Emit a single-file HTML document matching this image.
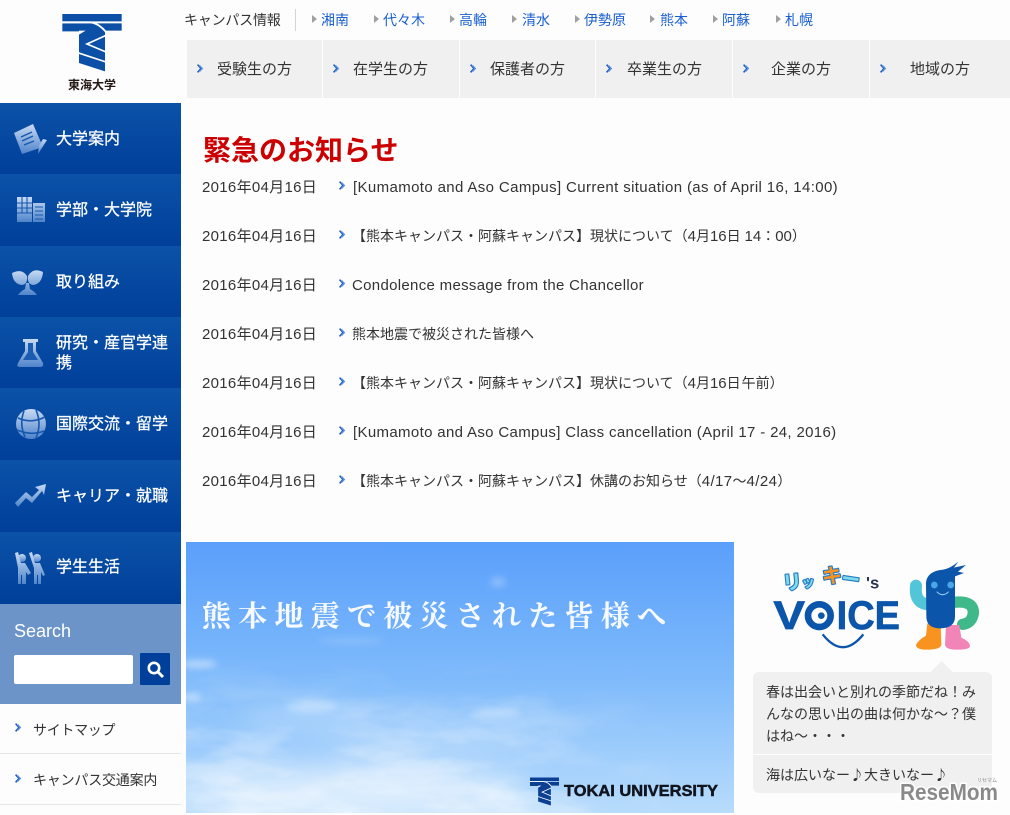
<!DOCTYPE html>
<html lang="ja"><head><meta charset="utf-8"><title>東海大学</title>
<style>
html,body{margin:0;padding:0;width:1010px;height:815px;overflow:hidden;background:#fdfdfe}
body{position:relative;font-family:"Liberation Sans","Noto Sans CJK JP",sans-serif;color:#333}
.t{position:absolute;white-space:nowrap;line-height:1;font-size:14px}
.n{position:absolute;top:40px;height:58px;background:#f0f0f0}
.s{position:absolute;left:0;width:181px;background:linear-gradient(#0b52a8,#003f9a)}
.m{position:absolute;left:56px;color:#fff;font-size:16px;line-height:1;white-space:nowrap;font-weight:400;-webkit-text-stroke:.25px #fff}
.c{color:#1a5fd0}
.d{font-size:15px;letter-spacing:.3px}
.l{font-size:15px;letter-spacing:.37px}
.u{font-size:15px}
.j{font-family:"Noto Sans CJK JP",sans-serif}
.a,.g{position:absolute}
</style></head><body>
<svg width="0" height="0" style="position:absolute"><defs>
<linearGradient id="ig" x1="0" y1="0" x2="0" y2="1"><stop offset="0" stop-color="#c8daf4"/><stop offset="1" stop-color="#4f84ca"/></linearGradient>
<linearGradient id="sky" x1="0" y1="0" x2="0" y2="1"><stop offset="0" stop-color="#5a9ffb"/><stop offset=".5" stop-color="#7ebafb"/><stop offset="1" stop-color="#b8dcfc"/></linearGradient>
<linearGradient id="fade" x1="0" y1="0" x2="0" y2="1"><stop offset=".42" stop-color="#000"/><stop offset=".65" stop-color="#666"/><stop offset="1" stop-color="#ddd"/></linearGradient>
<linearGradient id="fadex" x1="0" y1="0" x2="1" y2="0"><stop offset="0" stop-color="#fff"/><stop offset=".6" stop-color="#fff"/><stop offset=".9" stop-color="#000"/></linearGradient>
<mask id="cmx"><rect width="548" height="271" fill="url(#fadex)"/></mask>
<mask id="cm"><rect width="548" height="271" fill="url(#fade)"/></mask>
<filter id="tb" x="0" y="0" width="100%" height="100%"><feTurbulence type="fractalNoise" baseFrequency=".011 .032" numOctaves="4" seed="7"/><feColorMatrix values="0 0 0 0 1 0 0 0 0 1 0 0 0 0 1 3.4 0 0 0 -1.35"/></filter>
<filter id="b1" x="-60%" y="-200%" width="220%" height="500%"><feGaussianBlur stdDeviation="14"/></filter>
<filter id="b2" x="-60%" y="-200%" width="220%" height="500%"><feGaussianBlur stdDeviation="3.5"/></filter>
<g id="ar"><path d="M.6 .6 4 4.5 .6 8.4" fill="none" stroke="#1a5cc0" stroke-width="1.6"/><path d="M2.6 1.6 5.3 4.5 2.6 7.4" fill="none" stroke="#5b93dc" stroke-width="1.4"/></g>
<g id="lg">
<path d="M22 18H200V40H22ZM22 46H200V68H150V190L72 165V70H22Z"/>
<path d="M16 43H105Q130 45 153 72" fill="none" stroke="#fff" stroke-width="5.5"/>
<path d="M72 68H92L72 80Z" fill="#fff"/>
<path d="M153 82 96 108 153 132M68 134 153 162" fill="none" stroke="#fff" stroke-width="5"/>
</g>
</defs></svg>

<!-- logo -->
<svg style="position:absolute;left:55px;top:8px" width="75" height="90" viewBox="0 0 225 270" fill="#0b4fa6"><use href="#lg"/></svg>
<div class="t" style="left:68px;top:79px;font-size:12px;font-weight:700;color:#231815;line-height:12px">東海大学</div>

<!-- campus -->
<div class="t" style="left:184px;top:13px;letter-spacing:-.2px">キャンパス情報</div>
<div class="a" style="left:295px;top:9px;width:1px;height:22px;background:#d4d4d4"></div>
<svg class="a" style="left:0;top:0" width="1010" height="40" fill="#a0a0a0"><path d="M312 15l5 4-5 4zM374 15l5 4-5 4zM450 15l5 4-5 4zM512 15l5 4-5 4zM575 15l5 4-5 4zM650 15l5 4-5 4zM713 15l5 4-5 4zM776 15l5 4-5 4z"/></svg>
<div class="t c" style="left:321px;top:13px">湘南</div>
<div class="t c" style="left:383px;top:13px">代々木</div>
<div class="t c" style="left:459px;top:13px">高輪</div>
<div class="t c" style="left:522px;top:13px">清水</div>
<div class="t c" style="left:584px;top:13px">伊勢原</div>
<div class="t c" style="left:660px;top:13px">熊本</div>
<div class="t c" style="left:722px;top:13px">阿蘇</div>
<div class="t c" style="left:785px;top:13px">札幌</div>

<!-- nav -->
<div class="n" style="left:187px;width:135px"></div>
<div class="n" style="left:323px;width:136px"></div>
<div class="n" style="left:460px;width:135px"></div>
<div class="n" style="left:596px;width:136px"></div>
<div class="n" style="left:733px;width:136px"></div>
<div class="n" style="left:870px;width:140px"></div>
<div class="t" style="left:217px;top:62px;font-size:15px">受験生の方</div>
<div class="t" style="left:353px;top:62px;font-size:15px">在学生の方</div>
<div class="t" style="left:490px;top:62px;font-size:15px">保護者の方</div>
<div class="t" style="left:627px;top:62px;font-size:15px">卒業生の方</div>
<div class="t" style="left:771px;top:62px;font-size:15px">企業の方</div>
<div class="t" style="left:910px;top:62px;font-size:15px">地域の方</div>

<!-- chevrons -->
<svg class="a" style="left:0;top:0" width="1010" height="815">
<use href="#ar" x="197" y="64"/><use href="#ar" x="333" y="64"/><use href="#ar" x="470" y="64"/><use href="#ar" x="606" y="64"/><use href="#ar" x="743" y="64"/><use href="#ar" x="880" y="64"/>
<use href="#ar" x="339" y="181"/><use href="#ar" x="339" y="230"/><use href="#ar" x="339" y="279"/><use href="#ar" x="339" y="328"/><use href="#ar" x="339" y="377"/><use href="#ar" x="339" y="426"/><use href="#ar" x="339" y="475"/>
<use href="#ar" x="15" y="723"/><use href="#ar" x="15" y="774"/>
</svg>

<!-- sidebar -->
<div class="s" style="top:103px;height:71px"></div>
<div class="s" style="top:174px;height:72px"></div>
<div class="s" style="top:246px;height:71px"></div>
<div class="s" style="top:317px;height:71px"></div>
<div class="s" style="top:388px;height:72px"></div>
<div class="s" style="top:460px;height:72px"></div>
<div class="s" style="top:532px;height:72px"></div>
<div class="m" style="top:132px">大学案内</div>
<div class="m" style="top:203px">学部・大学院</div>
<div class="m" style="top:275px">取り組み</div>
<div class="m" style="top:336px">研究・産官学連</div>
<div class="m" style="top:356px">携</div>
<div class="m" style="top:417px">国際交流・留学</div>
<div class="m" style="top:489px">キャリア・就職</div>
<div class="m" style="top:560px">学生生活</div>

<svg class="a" style="left:0;top:100px" width="181" height="500" viewBox="0 100 181 500">
<g fill="url(#ig)">
<path d="M14 133 33 124 43 147 22 154Z"/><path d="M38 154 47 140 43 139 39 146Z"/>
<path d="M17 197H32V222H17ZM33 203H45V222H33Z"/>
<path d="M12 273Q22 268 27 276 28 284 22 285 13 284 12 273ZM43 272Q33 267 28 276 27 284 33 285 42 284 43 272ZM26 283H29L30 289Q34 291 37 295H18Q21 291 25 289Z"/>
<path d="M23 339H38V342H36V351L43 363Q44 367 40 367H20Q16 367 18 363L25 351V342H23Z"/>
<circle cx="31" cy="424" r="15"/>
<path d="M15 503 26 492 32 497 39 490 35 487 46 484 44 495 42 491 32 503 26 498 18 507Z"/>
<circle cx="22" cy="558" r="4"/><circle cx="37" cy="558" r="4"/>
<path d="M15 553 18 552 21 563H25L31 573 28 575 26 572V584H22V575H21V584H18V568ZM29 553 32 552 35 563H40L45 575 43 576 41 572V584H38V575H37V584H34V568Z"/>
</g>
<g stroke="#1658ad" fill="none" stroke-width="1.1">
<path d="M21 137 32 132M22 141 33 136M24 145 34 141" stroke-width="1.4"/>
<path d="M17 203H32M17 208H32M17 213H32M22 197V213M27 197V213M35 207H43M35 211H43M35 215H43M35 219H43"/>
<path d="M28 343H33V352L38 360H23L28 352Z" stroke="none" fill="#1b5cb0"/>
<path d="M18 418Q31 424 45 417M17 430Q31 436 44 431M24 411Q19 424 25 437M36 410Q42 424 36 438" stroke-width="1.6"/>
</g></svg>

<!-- search -->
<div class="a" style="left:0;top:604px;width:181px;height:100px;background:#6c94c9"></div>
<div class="t" style="left:14px;top:622px;font-size:18px;color:#fff">Search</div>
<div class="a" style="left:14px;top:655px;width:119px;height:29px;background:#fff;border-radius:2px"></div>
<div class="a" style="left:140px;top:653px;width:30px;height:32px;background:#00409a;border-radius:1px"></div>
<svg class="a" style="left:140px;top:653px" width="30" height="32"><circle cx="14" cy="15" r="5.2" fill="none" stroke="#fff" stroke-width="2.6"/><path d="M18 19 23 24" stroke="#fff" stroke-width="3"/></svg>

<div class="t" style="left:33px;top:723px;letter-spacing:-.3px">サイトマップ</div>
<div class="a" style="left:0;top:753px;width:181px;height:1px;background:#e4e6e8"></div>
<div class="t" style="left:33px;top:773px;letter-spacing:-.2px">キャンパス交通案内</div>
<div class="a" style="left:0;top:804px;width:181px;height:1px;background:#e4e6e8"></div>

<!-- news -->
<div class="t" style="left:203px;top:137px;font-size:28px;font-weight:700;color:#cc0000">緊急のお知らせ</div>
<div class="t d" style="left:202px;top:180px">2016年04月16日</div>
<div class="t d" style="left:202px;top:229px">2016年04月16日</div>
<div class="t d" style="left:202px;top:278px">2016年04月16日</div>
<div class="t d" style="left:202px;top:327px">2016年04月16日</div>
<div class="t d" style="left:202px;top:376px">2016年04月16日</div>
<div class="t d" style="left:202px;top:425px">2016年04月16日</div>
<div class="t d" style="left:202px;top:474px">2016年04月16日</div>
<div class="t l" style="left:353px;top:180px">[Kumamoto and Aso Campus] Current situation (as of April 16, 14:00)</div>
<div class="t" style="left:352px;top:229px">【熊本キャンパス・阿蘇キャンパス】現状について（<span class="u">4</span>月<span class="u">16</span>日 <span class="u">14</span>：<span class="u">00</span>）</div>
<div class="t" style="left:352px;top:278px;font-size:15px;letter-spacing:.31px">Condolence message from the Chancellor</div>
<div class="t" style="left:352px;top:327px">熊本地震で被災された皆様へ</div>
<div class="t" style="left:352px;top:376px">【熊本キャンパス・阿蘇キャンパス】現状について（<span class="u">4</span>月<span class="u">16</span>日<span style="margin-left:1px">午前</span>）</div>
<div class="t l" style="left:353px;top:425px;letter-spacing:.34px">[Kumamoto and Aso Campus] Class cancellation (April 17 - 24, 2016)</div>
<div class="t" style="left:352px;top:474px">【熊本キャンパス・阿蘇キャンパス】休講のお知らせ（<span class="u" style="letter-spacing:.4px">4/17</span>〜<span class="u" style="letter-spacing:.4px">4/24</span>）</div>

<!-- banner -->
<svg class="a" style="left:186px;top:542px" width="548" height="271" viewBox="0 0 548 271">
<rect width="548" height="271" fill="url(#sky)"/>
<g fill="#fff" filter="url(#b1)">
<ellipse cx="170" cy="250" rx="170" ry="26" opacity=".55"/>
<ellipse cx="260" cy="195" rx="120" ry="12" opacity=".3"/>
<ellipse cx="120" cy="175" rx="70" ry="12" opacity=".3"/>
</g>
<g mask="url(#cmx)"><g mask="url(#cm)"><rect width="548" height="271" filter="url(#tb)" opacity=".5"/></g></g>
<g fill="#fff" filter="url(#b2)">
<ellipse cx="13" cy="122" rx="18" ry="4" opacity=".45"/>
<ellipse cx="5" cy="155" rx="10" ry="4" opacity=".4"/>
<ellipse cx="312" cy="40" rx="8" ry="5" opacity=".25"/>
<ellipse cx="165" cy="99" rx="32" ry="2.5" opacity=".2"/>
<ellipse cx="310" cy="170" rx="25" ry="4" opacity=".3"/>
<ellipse cx="125" cy="165" rx="25" ry="6" opacity=".3"/>
</g>
<text x="16" y="84" font-family="'Noto Serif CJK JP','Noto Serif CJK SC',serif" font-size="29" font-weight="700" fill="#fff" textLength="464" lengthAdjust="spacing" opacity=".95">熊本地震で被災された皆様へ</text>
<svg x="344" y="235" width="29" height="29" viewBox="22 18 178 172" fill="#0b3f94"><use href="#lg"/></svg>
<text x="378" y="254" font-family="'Liberation Sans',sans-serif" font-size="16" font-weight="700" fill="#10151f" stroke="#10151f" stroke-width=".5" textLength="154" lengthAdjust="spacingAndGlyphs">TOKAI UNIVERSITY</text>
</svg>

<!-- voice -->
<svg class="a" style="left:740px;top:545px" width="270" height="270" viewBox="0 0 810 810">
<g font-family="'Noto Sans CJK JP',sans-serif" font-weight="700" paint-order="stroke" stroke="#2d7dc4" stroke-width="7" stroke-linejoin="round">
<text x="130" y="135" font-size="58" fill="#7fdcec" transform="rotate(-6 130 135)">リ</text>
<text x="186" y="128" font-size="40" fill="#7fdcec" transform="rotate(-6 186 128)">ッ</text>
<text x="246" y="112" font-size="60" fill="#f7931e">キ</text>
<text x="302" y="118" font-size="56" fill="#7fdcec" transform="rotate(8 302 118)">ー</text>
</g>
<text x="378" y="130" font-family="'Liberation Sans',sans-serif" font-weight="700" font-size="50" fill="#2c3550">'s</text>
<g font-family="'Liberation Sans',sans-serif" font-weight="700" fill="#0b55aa">
<text x="100" y="252" font-size="120" textLength="95" lengthAdjust="spacingAndGlyphs" stroke="#0b55aa" stroke-width="2">V</text>
<circle cx="238" cy="212" r="34" fill="none" stroke="#0b55aa" stroke-width="20"/>
<circle cx="244" cy="212" r="10"/>
<text x="290" y="252" font-size="120" textLength="190" lengthAdjust="spacingAndGlyphs" stroke="#0b55aa" stroke-width="2">ICE</text>
</g>
<path d="M248 268Q308 345 370 268" fill="none" stroke="#0b55aa" stroke-width="7"/>
<path d="M570 178Q522 178 528 122" fill="none" stroke="#52c5d9" stroke-width="36" stroke-linecap="round"/>
<path d="M640 172Q702 165 700 205 695 235 668 238" fill="none" stroke="#3fb98a" stroke-width="34" stroke-linecap="round"/>
<path d="M562 235H602L604 300Q600 314 560 314 528 314 528 300 535 285 558 272Z" fill="#f7931e"/>
<path d="M618 240H658L664 278Q690 290 690 304 688 314 650 314 618 314 615 300Z" fill="#f285b8"/>
<path d="M558 112Q562 78 610 74 632 70 655 50L642 68 678 60 654 80 672 84 645 94V215Q645 250 600 250 558 250 559 212Z" fill="#0b55aa"/>
<circle cx="583" cy="120" r="10" fill="#4aa8e8"/><circle cx="632" cy="120" r="10" fill="#4aa8e8"/>
<path d="M590 140Q608 158 626 140" fill="none" stroke="#9fd0f0" stroke-width="3"/>
<path d="M572 381 605 348 638 381Z" fill="#f0f0f0"/>
</svg>
<div class="a" style="left:753px;top:672px;width:239px;height:121px;background:#f0f0f0;border-radius:6px"></div>
<div class="a" style="left:753px;top:754px;width:239px;height:1px;background:#fff"></div>
<div class="t" style="left:766px;top:685px">春は出会いと別れの季節だね！み</div>
<div class="t" style="left:766px;top:707px">んなの思い出の曲は何かな〜？僕</div>
<div class="t" style="left:766px;top:729px">はね〜・・・</div>
<div class="t" style="left:766px;top:768px">海は広いなー<span class="j">♪</span>大きいなー<span class="j">♪</span></div>

<!-- watermark -->
<svg class="a" style="left:890px;top:774px" width="120" height="35">
<text x="10" y="26" font-family="'Liberation Sans',sans-serif" font-weight="700" font-size="23" fill="#8a8a8a" stroke="#fff" stroke-width="3" paint-order="stroke" textLength="98" lengthAdjust="spacingAndGlyphs">ReseMom</text>
<text x="87" y="8" font-family="'Noto Sans CJK JP',sans-serif" font-size="5" fill="#888">リセマム</text>
</svg>
</body></html>
